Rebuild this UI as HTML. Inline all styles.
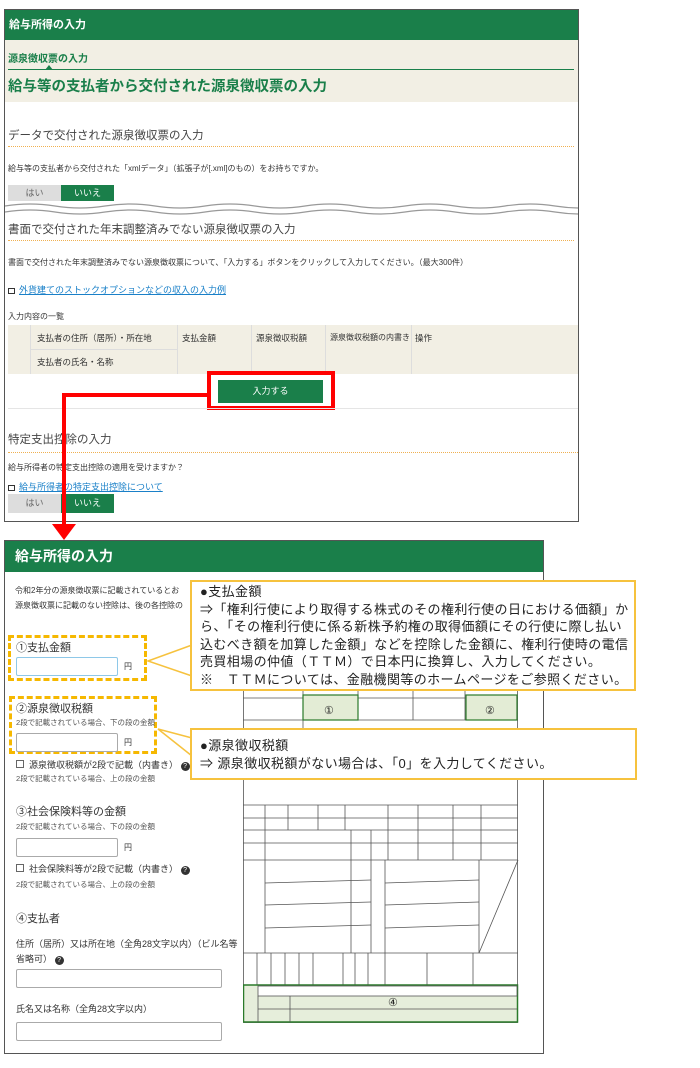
<!DOCTYPE html>
<html><head><meta charset="utf-8"><style>
*{margin:0;padding:0;box-sizing:border-box}
body{width:700px;height:1068px;background:#fff;position:relative;font-family:"Liberation Sans","Noto Sans CJK JP",sans-serif;color:#333;overflow:hidden}
.a{position:absolute;white-space:nowrap}
.g{background:#1a7f4a;color:#fff}
.dot{position:absolute;height:0;border-top:1px dotted #f0b050}
.btn{position:absolute;height:16px;font-size:9px;text-align:center;line-height:16px}
.lnk{color:#1a80c8;text-decoration:underline;font-size:9px}
.ic{display:inline-block;width:7px;height:6px;border:1.5px solid #333;margin-right:4px;vertical-align:-1px}
.inp{position:absolute;border:1px solid #aaa;background:#fff;border-radius:2px}
.s{font-size:7.5px;color:#555}
.call{position:absolute;border:2px solid #f6c23e;background:#fff;font-size:13px;letter-spacing:0.4px;color:#222;line-height:17.5px;padding:1px 8px;white-space:nowrap}
.dash{position:absolute;border:3px dashed #f6b800}
</style></head><body>
<!-- top panel -->
<div class="a" style="left:4px;top:9px;width:575px;height:513px;border:1px solid #555"></div>
<div class="a g" style="left:5px;top:10px;width:573px;height:30px;font-size:11px;font-weight:bold;line-height:30px;padding-left:4px">給与所得の入力</div>
<div class="a" style="left:5px;top:40px;width:573px;height:62px;background:#f2efe4"></div>
<div class="a" style="left:8px;top:50px;font-size:10px;font-weight:bold;color:#1a7f4a">源泉徴収票の入力</div>
<div class="a" style="left:8px;top:69px;width:566px;height:1px;background:#1a7f4a"></div>
<svg class="a" style="left:45px;top:65px" width="8" height="5"><polygon points="0,5 8,5 4,0" fill="#1a7f4a"/></svg>
<div class="a" style="left:8px;top:75px;font-size:14.5px;font-weight:bold;color:#1a7f4a">給与等の支払者から交付された源泉徴収票の入力</div>
<div class="a" style="left:8px;top:127px;font-size:11.5px;color:#444">データで交付された源泉徴収票の入力</div>
<div class="dot" style="left:8px;top:146px;width:566px"></div>
<div class="a" style="left:8px;top:163px;font-size:8px">給与等の支払者から交付された「xmlデータ」（拡張子が[.xml]のもの）をお持ちですか。</div>
<div class="btn" style="left:8px;top:185px;width:53px;background:#ddd;color:#666">はい</div>
<div class="btn g" style="left:61px;top:185px;width:53px">いいえ</div>
<svg class="a" style="left:5px;top:202px" width="573" height="16"><path d="M0 4 q25 -4 50 0 t50 0 t50 0 t50 0 t50 0 t50 0 t50 0 t50 0 t50 0 t50 0 t50 0 t50 0" fill="none" stroke="#999" stroke-width="1.2"/><path d="M0 10 q25 -4 50 0 t50 0 t50 0 t50 0 t50 0 t50 0 t50 0 t50 0 t50 0 t50 0 t50 0 t50 0" fill="none" stroke="#999" stroke-width="1.2"/></svg>
<div class="a" style="left:8px;top:221px;font-size:11.5px;color:#444">書面で交付された年末調整済みでない源泉徴収票の入力</div>
<div class="dot" style="left:8px;top:240px;width:566px"></div>
<div class="a" style="left:8px;top:257px;font-size:8px">書面で交付された年末調整済みでない源泉徴収票について、「入力する」ボタンをクリックして入力してください。（最大300件）</div>
<div class="a" style="left:8px;top:280px"><span class="ic"></span><span class="lnk">外貨建てのストックオプションなどの収入の入力例</span></div>
<div class="a" style="left:8px;top:311px;font-size:8px">入力内容の一覧</div>
<div class="a" style="left:8px;top:325px;width:570px;height:49px;background:#f2efe4"></div>
<div class="a" style="left:30px;top:325px;width:1px;height:49px;background:#ddd"></div>
<div class="a" style="left:177px;top:325px;width:1px;height:49px;background:#ddd"></div>
<div class="a" style="left:251px;top:325px;width:1px;height:49px;background:#ddd"></div>
<div class="a" style="left:325px;top:325px;width:1px;height:49px;background:#ddd"></div>
<div class="a" style="left:411px;top:325px;width:1px;height:49px;background:#ddd"></div>
<div class="a" style="left:31px;top:349px;width:146px;height:1px;background:#ddd"></div>
<div class="a" style="left:37px;top:332px;font-size:8.5px">支払者の住所（居所）・所在地</div>
<div class="a" style="left:37px;top:356px;font-size:8.5px">支払者の氏名・名称</div>
<div class="a" style="left:182px;top:332px;font-size:8.5px">支払金額</div>
<div class="a" style="left:256px;top:332px;font-size:8.5px">源泉徴収税額</div>
<div class="a" style="left:330px;top:332px;font-size:8px">源泉徴収税額の内書き</div>
<div class="a" style="left:415px;top:332px;font-size:8.5px">操作</div>
<div class="a g" style="left:218px;top:380px;width:105px;height:23px;font-size:9px;text-align:center;line-height:23px">入力する</div>
<div class="a" style="left:207px;top:371px;width:128px;height:39px;border:4px solid #f00"></div>
<div class="a" style="left:8px;top:408px;width:570px;height:1px;background:#e5e5e5"></div>
<div class="a" style="left:8px;top:431px;font-size:11.5px;color:#444">特定支出控除の入力</div>
<div class="dot" style="left:8px;top:452px;width:570px"></div>
<div class="a" style="left:8px;top:462px;font-size:8px">給与所得者の特定支出控除の適用を受けますか？</div>
<div class="a" style="left:8px;top:477px"><span class="ic"></span><span class="lnk">給与所得者の特定支出控除について</span></div>
<div class="btn" style="left:8px;top:494px;width:53px;height:19px;line-height:19px;background:#ddd;color:#666">はい</div>
<div class="btn g" style="left:61px;top:494px;width:53px;height:19px;line-height:19px">いいえ</div>
<!-- red arrow -->
<div class="a" style="left:62px;top:393px;width:146px;height:4px;background:#f00"></div>
<div class="a" style="left:62px;top:393px;width:4px;height:134px;background:#f00"></div>
<svg class="a" style="left:52px;top:524px" width="24" height="16"><polygon points="0,0 24,0 12,16" fill="#f00"/></svg>

<!-- bottom panel -->
<div class="a" style="left:4px;top:540px;width:540px;height:514px;border:1px solid #555"></div>
<div class="a g" style="left:5px;top:541px;width:538px;height:31px;font-size:14px;font-weight:bold;line-height:31px;padding-left:10px">給与所得の入力</div>
<div class="a" style="left:15px;top:585px;font-size:8px">令和2年分の源泉徴収票に記載されているとお</div>
<div class="a" style="left:15px;top:600px;font-size:8px">源泉徴収票に記載のない控除は、後の各控除の</div>

<!-- form image -->
<svg class="a" style="left:243px;top:690px" width="276" height="334" fill="none" stroke="#555" stroke-width="0.8">
<rect x="0.5" y="0.5" width="274" height="332"/>
<line x1="0" y1="8" x2="275" y2="8"/><line x1="0" y1="30" x2="275" y2="30"/><line x1="0" y1="46" x2="275" y2="46"/>
<line x1="60" y1="0" x2="60" y2="46"/><line x1="115" y1="0" x2="115" y2="30"/><line x1="170" y1="0" x2="170" y2="30"/><line x1="222" y1="0" x2="222" y2="30"/>
<rect x="60" y="5" width="55" height="25" fill="#e3ecd5" stroke="#2a7a2a" stroke-width="1.2"/>
<rect x="223" y="5" width="51" height="25" fill="#e3ecd5" stroke="#2a7a2a" stroke-width="1.2"/>
<text x="81" y="24" font-size="11" fill="#222" stroke="none" font-family="Liberation Sans,sans-serif">①</text>
<text x="242" y="24" font-size="11" fill="#222" stroke="none" font-family="Liberation Sans,sans-serif">②</text>
<line x1="0" y1="115" x2="275" y2="115"/><line x1="0" y1="128" x2="275" y2="128"/><line x1="0" y1="140" x2="275" y2="140"/><line x1="0" y1="153" x2="275" y2="153"/><line x1="0" y1="170" x2="275" y2="170"/>
<line x1="22" y1="115" x2="22" y2="263"/><line x1="45" y1="115" x2="45" y2="140"/><line x1="75" y1="115" x2="75" y2="140"/><line x1="102" y1="115" x2="102" y2="140"/><line x1="145" y1="115" x2="145" y2="170"/><line x1="175" y1="115" x2="175" y2="170"/><line x1="210" y1="115" x2="210" y2="170"/><line x1="238" y1="115" x2="238" y2="170"/>
<line x1="128" y1="140" x2="128" y2="263"/><line x1="142" y1="170" x2="142" y2="263"/><line x1="108" y1="140" x2="108" y2="263"/><line x1="236" y1="170" x2="236" y2="263"/>
<line x1="22" y1="193" x2="128" y2="190"/><line x1="22" y1="215" x2="128" y2="212"/><line x1="22" y1="238" x2="128" y2="235"/>
<line x1="142" y1="193" x2="236" y2="190"/><line x1="142" y1="215" x2="236" y2="212"/><line x1="142" y1="238" x2="236" y2="235"/>
<line x1="275" y1="170" x2="236" y2="263"/>
<line x1="0" y1="263" x2="275" y2="263"/><line x1="0" y1="295" x2="275" y2="295"/>
<line x1="14" y1="263" x2="14" y2="295"/><line x1="28" y1="263" x2="28" y2="295"/><line x1="42" y1="263" x2="42" y2="295"/><line x1="56" y1="263" x2="56" y2="295"/><line x1="70" y1="263" x2="70" y2="295"/><line x1="100" y1="263" x2="100" y2="295"/><line x1="112" y1="263" x2="112" y2="295"/><line x1="125" y1="263" x2="125" y2="295"/><line x1="142" y1="263" x2="142" y2="295"/><line x1="184" y1="263" x2="184" y2="295"/><line x1="230" y1="263" x2="230" y2="295"/>
<rect x="0.5" y="295" width="274" height="37" fill="#e6eedb" stroke="#2a7a2a" stroke-width="1.5"/>
<rect x="15" y="296" width="259" height="10" fill="#fff" stroke="#555"/>
<line x1="15" y1="319" x2="274" y2="319"/><line x1="15" y1="306" x2="15" y2="332"/><line x1="47" y1="306" x2="47" y2="332"/>
<text x="145" y="316" font-size="11" fill="#222" stroke="none" font-family="Liberation Sans,sans-serif">④</text>
</svg>

<!-- left form fields -->
<div class="dash" style="left:8px;top:635px;width:139px;height:46px"></div>
<div class="a" style="left:16px;top:639px;font-size:11px">①支払金額</div>
<div class="inp" style="left:16px;top:657px;width:102px;height:19px;border-color:#8ec8e8"></div>
<div class="a" style="left:124px;top:661px;font-size:8px">円</div>
<div class="dash" style="left:9px;top:696px;width:148px;height:58px"></div>
<div class="a" style="left:16px;top:700px;font-size:11px">②源泉徴収税額</div>
<div class="a s" style="left:16px;top:717px">2段で記載されている場合、下の段の金額</div>
<div class="inp" style="left:16px;top:733px;width:102px;height:19px"></div>
<div class="a" style="left:124px;top:737px;font-size:8px">円</div>
<div class="a" style="left:16px;top:758px;font-size:9px"><span style="display:inline-block;width:8px;height:8px;border:1px solid #666;margin-right:5px"></span>源泉徴収税額が2段で記載（内書き） <span style="display:inline-block;width:9px;height:9px;border-radius:50%;background:#333;color:#fff;font-size:7px;text-align:center;line-height:9px">?</span></div>
<div class="a s" style="left:16px;top:773px">2段で記載されている場合、上の段の金額</div>
<div class="a" style="left:16px;top:803px;font-size:11px">③社会保険料等の金額</div>
<div class="a s" style="left:16px;top:821px">2段で記載されている場合、下の段の金額</div>
<div class="inp" style="left:16px;top:838px;width:102px;height:19px"></div>
<div class="a" style="left:124px;top:842px;font-size:8px">円</div>
<div class="a" style="left:16px;top:862px;font-size:9px"><span style="display:inline-block;width:8px;height:8px;border:1px solid #666;margin-right:5px"></span>社会保険料等が2段で記載（内書き） <span style="display:inline-block;width:9px;height:9px;border-radius:50%;background:#333;color:#fff;font-size:7px;text-align:center;line-height:9px">?</span></div>
<div class="a s" style="left:16px;top:879px">2段で記載されている場合、上の段の金額</div>
<div class="a" style="left:16px;top:910px;font-size:11px">④支払者</div>
<div class="a" style="left:16px;top:937px;font-size:9px">住所（居所）又は所在地（全角28文字以内）（ビル名等</div>
<div class="a" style="left:16px;top:952px;font-size:9px">省略可） <span style="display:inline-block;width:9px;height:9px;border-radius:50%;background:#333;color:#fff;font-size:7px;text-align:center;line-height:9px">?</span></div>
<div class="inp" style="left:16px;top:969px;width:206px;height:19px"></div>
<div class="a" style="left:16px;top:1002px;font-size:9px">氏名又は名称（全角28文字以内）</div>
<div class="inp" style="left:16px;top:1022px;width:206px;height:19px"></div>

<!-- callouts -->
<svg class="a" style="left:145px;top:640px" width="50" height="120"><polyline points="47,5 3,21 47,36" fill="#fff" stroke="#f6c23e" stroke-width="1.5"/><polyline points="47,98 13,89 47,116" fill="#fff" stroke="#f6c23e" stroke-width="1.5"/></svg>
<div class="call" style="left:190px;top:580px;width:446px;height:111px">●支払金額<br>⇒「権利行使により取得する株式のその権利行使の日における価額」か<br>ら、「その権利行使に係る新株予約権の取得価額にその行使に際し払い<br>込むべき額を加算した金額」などを控除した金額に、権利行使時の電信<br>売買相場の仲値（ＴＴＭ）で日本円に換算し、入力してください。<br>※　ＴＴＭについては、金融機関等のホームページをご参照ください。</div>
<div class="call" style="left:190px;top:728px;width:447px;height:52px;padding-top:7px;line-height:18px">●源泉徴収税額<br>⇒ 源泉徴収税額がない場合は、「0」を入力してください。</div>
</body></html>
